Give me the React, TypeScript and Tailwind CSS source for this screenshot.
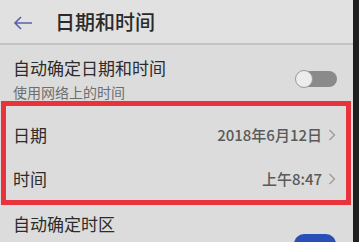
const font = { fontFamily: '"Noto Sans CJK SC", "Noto Sans", sans-serif' };

function Chevron() {
  return (
    <svg width="8" height="12" viewBox="0 0 8 12" className="ml-[6px]">
      <polyline points="1.5,1 6.5,6 1.5,11" fill="none" stroke="#9a9a9a" strokeWidth="1.3" />
    </svg>
  );
}

function ValueRow({ label, value, className }: { label: string; value: string; className: string }) {
  return (
    <div className={`flex items-center justify-between pl-[7px] pr-[10px] ${className}`}>
      <span className="text-[17px] leading-[22px] text-[#2c2c2c]">{label}</span>
      <span className="flex items-center text-[15px] font-medium leading-[20px] text-[#5a5a5a]">
        {value}
        <Chevron />
      </span>
    </div>
  );
}

export default function App() {
  return (
    <div className="flex h-[242px] w-[359px] overflow-hidden bg-[#dcdcdc]" style={font}>
      <div className="flex w-[353px] flex-col">
        <div className="flex h-[43px] shrink-0 items-center bg-[#e1e1e1] pl-[13px]">
          <svg width="20" height="14" viewBox="0 0 20 14" className="mt-[2px]">
            <path d="M19 7H2M8 1L2 7l6 6" fill="none" stroke="#5b63a6" strokeWidth="1.6" />
          </svg>
          <span className="ml-[22px] text-[20px] font-medium leading-[26px] text-[#2a2a2a]">日期和时间</span>
        </div>
        <div className="h-[2px] shrink-0 bg-[#c2c2c2]" />

        <div className="flex h-[56px] shrink-0 items-start justify-between pl-[13px] pr-[16px] pt-[12px]">
          <div className="flex flex-col">
            <span className="text-[17px] leading-[22px] text-[#2c2c2c]">自动确定日期和时间</span>
            <span className="mt-[5px] text-[14px] leading-[16px] text-[#6e6e6e]">使用网络上的时间</span>
          </div>
          <div className="relative mt-[14px] h-[16px] w-[41px] rounded-full bg-[#8a8a8a]">
            <div className="absolute left-[-1px] top-[-1px] h-[18px] w-[18px] rounded-full border border-[#9a9a9a] bg-[#ececec]" />
          </div>
        </div>

        <div className="ml-[1px] w-[350px] shrink-0 border-[5px] border-[#e8333d] pt-[6px]">
          <ValueRow label="日期" value="2018年6月12日" className="h-[46px]" />
          <ValueRow label="时间" value="上午8:47" className="h-[42px]" />
        </div>

        <div className="flex shrink-0 items-start justify-between pl-[13px] pr-[17px] pt-[8px]">
          <span className="text-[17px] leading-[22px] text-[#2c2c2c]">自动确定时区</span>
          <div className="mt-[21px] h-[20px] w-[42px] rounded-full bg-[#2b4fb8]" />
        </div>
      </div>
      <div className="flex-1 bg-[#1f1f1f]" />
    </div>
  );
}
